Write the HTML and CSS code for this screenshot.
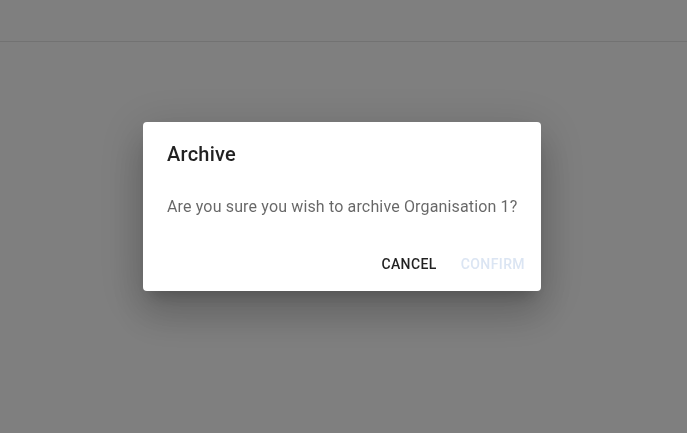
FILE: index.html
```html
<!DOCTYPE html>
<html lang="en">
<head>
    <meta charset="UTF-8">
    <meta name="viewport" content="width=device-width, initial-scale=1.0">
    <title>Organisations</title>
    <link rel="stylesheet" href="styles.css">
</head>
<body>

    <header class="topbar"></header>
    <main class="content"></main>

    <!-- Archive confirmation dialog -->
    <div class="scrim">
        <div class="dialog" role="alertdialog" aria-labelledby="dialogTitle">
            <h2 class="dialog-title" id="dialogTitle">Archive</h2>
            <p class="dialog-body">Are you sure you wish to archive Organisation 1?</p>
            <div class="dialog-actions">
                <button class="btn">Cancel</button>
                <button class="btn" disabled>Confirm</button>
            </div>
        </div>
    </div>

</body>
</html>
```

FILE: styles.css
```css
html, body {
    margin: 0;
    height: 100%;
}
body {
    font-family: Roboto, "Noto Sans", Arial, sans-serif;
    background: #ffffff;
    overflow: hidden;
}
.topbar {
    height: 41px;
    border-bottom: 1px solid #e4e4e4;
    background: #ffffff;
}
.content {
    height: 391px;
}
.scrim {
    position: fixed;
    inset: 0;
    background: rgba(0, 0, 0, 0.5);
    display: flex;
    justify-content: center;
    align-items: flex-start;
    padding: 122px 3px 0 0;
}
.dialog {
    width: 398px;
    height: 169px;
    box-sizing: border-box;
    background: #ffffff;
    border-radius: 4px;
    box-shadow: 0 11px 15px -7px rgba(0, 0, 0, 0.2),
                0 24px 38px 3px rgba(0, 0, 0, 0.14),
                0 9px 46px 8px rgba(0, 0, 0, 0.12);
    display: flex;
    flex-direction: column;
}
.dialog-title {
    margin: 0;
    padding: 20px 24px 0;
    font-size: 20px;
    font-weight: 500;
    line-height: 24px;
    letter-spacing: 0.0125em;
    color: rgba(0, 0, 0, 0.87);
}
.dialog-body {
    margin: 0;
    padding: 29px 24px 0;
    font-size: 16px;
    line-height: 24px;
    letter-spacing: 0.15px;
    white-space: nowrap;
    color: rgba(0, 0, 0, 0.6);
}
.dialog-actions {
    margin-top: auto;
    display: flex;
    justify-content: flex-end;
    gap: 8px;
    padding: 8px 8px 9px;
}
.btn {
    height: 36px;
    padding: 0 8px;
    border: none;
    background: none;
    border-radius: 4px;
    font-family: inherit;
    font-size: 14px;
    font-weight: 500;
    letter-spacing: 0.4px;
    text-transform: uppercase;
    color: rgba(0, 0, 0, 0.87);
    cursor: pointer;
}
.btn:disabled {
    color: #dbe5f3;
    cursor: default;
}
```
